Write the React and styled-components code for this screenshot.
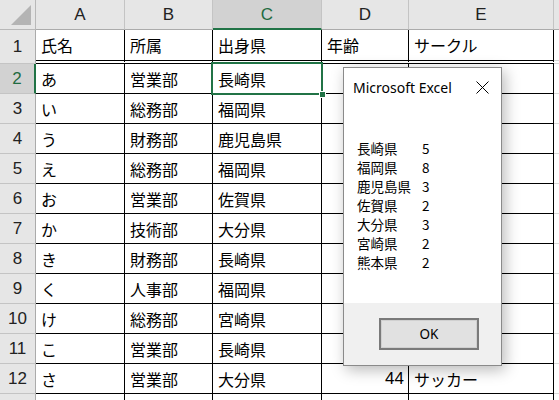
import React from "react";
import styled, { createGlobalStyle, css } from "styled-components";

const GlobalStyle = createGlobalStyle`
  html, body { margin: 0; padding: 0; background: #ffffff; overflow: hidden; }
  * { box-sizing: border-box; }
`;

const Sheet = styled.div`
  position: relative;
  width: 559px;
  height: 400px;
  overflow: hidden;
  background: #ffffff;
`;

const Grid = styled.div`
  display: grid;
  grid-template-columns: 36px 89px 88px 109px 87px 145px 1fr;
  grid-template-rows: 30px 34px;
  grid-auto-rows: 30px;
`;

const Corner = styled.div`
  position: relative;
  background: #e6e6e6;
  border-right: 1px solid #b8b8b8;
  border-bottom: 1px solid #b8b8b8;
  svg { position: absolute; right: 4px; bottom: 4px; }
`;

const ColHeader = styled.div`
  display: flex;
  align-items: center;
  justify-content: center;
  font-family: "Liberation Sans", Arial, sans-serif;
  font-size: 17px;
  color: ${(p) => (p.$selected ? "#1f6b41" : "#222222")};
  background: ${(p) => (p.$selected ? "#d2d2d2" : "#e6e6e6")};
  border-right: 1px solid #c4c4c4;
  border-bottom: ${(p) => (p.$selected ? "2px solid #217346" : "1px solid #ababab")};
  padding-top: ${(p) => (p.$selected ? "1px" : "0")};
`;

const RowHeader = styled.div`
  display: flex;
  align-items: center;
  justify-content: center;
  font-family: "Liberation Sans", Arial, sans-serif;
  font-size: 17px;
  color: ${(p) => (p.$selected ? "#1f6b41" : "#222222")};
  background: ${(p) => (p.$selected ? "#d2d2d2" : "#e6e6e6")};
  border-right: ${(p) => (p.$selected ? "2px solid #217346" : "1px solid #ababab")};
  border-bottom: 1px solid #c4c4c4;
`;

const Cell = styled.div`
  display: flex;
  align-items: center;
  justify-content: ${(p) => (p.$num ? "flex-end" : "flex-start")};
  padding: 0 4px 0 5px;
  font-family: ${(p) =>
    p.$num
      ? '"Liberation Sans", Arial, sans-serif'
      : '"Noto Sans CJK JP", "Noto Sans", sans-serif'};
  font-size: ${(p) => (p.$num ? "17px" : "16px")};
  color: #000000;
  white-space: nowrap;
  overflow: hidden;
  border-right: 1px solid #000000;
  border-bottom: ${(p) => (p.$first ? "4px double #000000" : "1px solid #000000")};
`;

const Blank = styled.div`
  border-bottom: ${(p) => (p.$first ? "4px double #d4d4d4" : "1px solid #dadada")};
  background: ${(p) => (p.$head ? "#e6e6e6" : "#ffffff")};
  ${(p) =>
    p.$head &&
    css`
      border-bottom: 1px solid #ababab;
    `}
`;

const Selection = styled.div`
  position: absolute;
  left: 211px;
  top: 62px;
  width: 112px;
  height: 33px;
  border: 2px solid #217346;
  pointer-events: none;
`;

const Handle = styled.div`
  position: absolute;
  right: -5px;
  bottom: -5px;
  width: 7px;
  height: 7px;
  background: #217346;
  border: 1px solid #ffffff;
`;

const Dialog = styled.div`
  position: absolute;
  left: 343px;
  top: 67px;
  width: 159px;
  height: 299px;
  display: flex;
  flex-direction: column;
  background: #ffffff;
  border: 1px solid #8a8a8a;
  box-shadow: 3px 4px 14px rgba(0, 0, 0, 0.28);
  font-family: "Noto Sans", "Liberation Sans", sans-serif;
`;

const TitleBar = styled.div`
  height: 38px;
  display: flex;
  align-items: center;
  justify-content: space-between;
  padding: 0 12px 0 9px;
  font-size: 14px;
  color: #000000;
`;

const CloseIcon = styled.svg`
  width: 13px;
  height: 13px;
`;

const Body = styled.div`
  flex: 1;
  padding: 32px 0 0 13px;
`;

const List = styled.div`
  display: grid;
  grid-template-columns: 65px auto;
  grid-auto-rows: 19px;
  font-family: "Noto Sans CJK JP", "Noto Sans", sans-serif;
  font-size: 13.5px;
  color: #000000;
  align-items: center;
`;

const Footer = styled.div`
  height: 62px;
  background: #f0f0f0;
  display: flex;
  align-items: center;
  justify-content: flex-end;
  padding: 0 22px 0 0;
`;

const OkButton = styled.button`
  width: 100px;
  height: 32px;
  background: #e1e1e1;
  border: 2px solid #7a7a7a;
  box-shadow: inset 0 0 0 1px #d0d0d0;
  font-family: "Noto Sans", "Liberation Sans", sans-serif;
  font-size: 13.5px;
  color: #000000;
  padding: 0;
`;

const columns = ["A", "B", "C", "D", "E"];

const rows = [
  ["氏名", "所属", "出身県", "年齢", "サークル"],
  ["あ", "営業部", "長崎県", "", ""],
  ["い", "総務部", "福岡県", "", ""],
  ["う", "財務部", "鹿児島県", "", ""],
  ["え", "総務部", "福岡県", "", ""],
  ["お", "営業部", "佐賀県", "", ""],
  ["か", "技術部", "大分県", "", ""],
  ["き", "財務部", "長崎県", "", ""],
  ["く", "人事部", "福岡県", "", ""],
  ["け", "総務部", "宮崎県", "", ""],
  ["こ", "営業部", "長崎県", "", ""],
  ["さ", "営業部", "大分県", "44", "サッカー"],
  ["", "", "", "", ""],
];

const summary = [
  ["長崎県", "5"],
  ["福岡県", "8"],
  ["鹿児島県", "3"],
  ["佐賀県", "2"],
  ["大分県", "3"],
  ["宮崎県", "2"],
  ["熊本県", "2"],
];

export default function App() {
  return (
    <>
      <GlobalStyle />
      <Sheet>
        <Grid>
          <Corner>
            <svg width="20" height="20" viewBox="0 0 20 20">
              <polygon points="20,0 20,20 0,20" fill="#b4b4b4" />
            </svg>
          </Corner>
          {columns.map((c) => (
            <ColHeader key={c} $selected={c === "C"}>
              {c}
            </ColHeader>
          ))}
          <Blank $head />
          {rows.map((r, i) => (
            <React.Fragment key={i}>
              <RowHeader $selected={i === 1}>{i < 12 ? i + 1 : ""}</RowHeader>
              {r.map((v, j) => (
                <Cell key={j} $first={i === 0} $num={/^\d+$/.test(v)}>
                  {v}
                </Cell>
              ))}
              <Blank $first={i === 0} />
            </React.Fragment>
          ))}
        </Grid>
        <Selection>
          <Handle />
        </Selection>
        <Dialog>
          <TitleBar>
            <span>Microsoft Excel</span>
            <CloseIcon viewBox="0 0 13 13">
              <path d="M0.5 0.5 L12.5 12.5 M12.5 0.5 L0.5 12.5" stroke="#000" strokeWidth="1" fill="none" />
            </CloseIcon>
          </TitleBar>
          <Body>
            <List>
              {summary.map(([k, n]) => (
                <React.Fragment key={k}>
                  <span>{k}</span>
                  <span>{n}</span>
                </React.Fragment>
              ))}
            </List>
          </Body>
          <Footer>
            <OkButton>OK</OkButton>
          </Footer>
        </Dialog>
      </Sheet>
    </>
  );
}
